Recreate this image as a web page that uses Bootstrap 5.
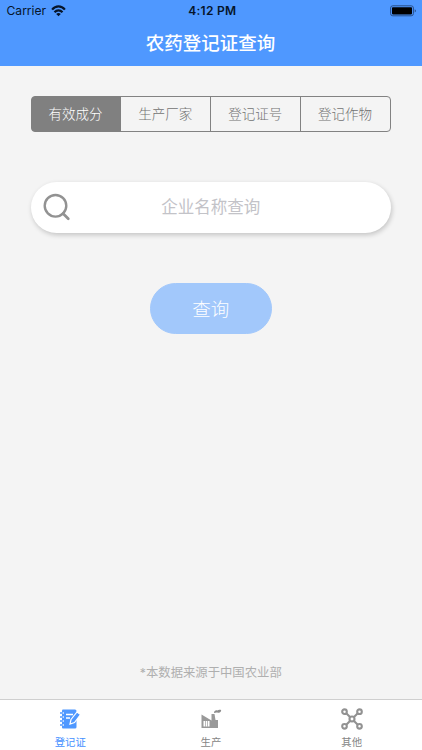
<!DOCTYPE html>
<html lang="zh-CN">
<head>
<meta charset="utf-8">
<meta name="viewport" content="width=device-width, initial-scale=1">
<title>农药登记证查询</title>
<link href="https://cdn.jsdelivr.net/npm/bootstrap@5.3.0/dist/css/bootstrap.min.css" rel="stylesheet">
<style>
body{font-family:Inter,"Noto Sans CJK SC",sans-serif;background:#f4f4f4;height:100vh;overflow:hidden}
.app-head{background:#4f98ff;height:66px}
.status{height:22px;font-size:12.1px;color:#06152b;line-height:22px;padding-left:6.5px;padding-right:5px}
.status svg{display:block}
.wifi{margin-left:5px}
.clock{font-weight:600;font-size:12px;letter-spacing:.25px;padding-left:1px}
.app-title{font-size:18.5px;font-weight:500;line-height:42px;color:#fff;padding-right:1px}
.main-area{padding:30px 31px 0 30.5px}
.segments{height:36px}
.segments .btn{--bs-btn-color:#727272;--bs-btn-border-color:#828282;--bs-btn-active-bg:#808080;--bs-btn-active-border-color:#808080;--bs-btn-active-color:#fff;--bs-btn-border-radius:4px;font-size:13.5px;font-weight:300;line-height:33px;padding:0 1px 0 0;flex:1 1 0}
.search-box{height:51px;margin-top:50px;background:#fff;box-shadow:1px 2px 5px rgba(0,0,0,.2)}
.search-box svg{margin:0 0 2px 12px;flex:none}
.search-box input{font-size:16.5px;padding:0;color:#777;margin-right:40px}
.search-box input::placeholder{color:#c3c3c8;opacity:1}
.query-btn{width:122px;height:51px;margin-top:50px;--bs-btn-bg:#a2c8fb;--bs-btn-color:#fff;--bs-btn-border-color:#a2c8fb;font-size:18.5px;font-weight:300;padding:2px 0 0}
.source-note{font-size:12.35px;color:#afafaf;line-height:20px;margin-bottom:16px}
.tabs-bottom{height:51px;background:#fff;border-top:1px solid #cfcfcf}
.tabs-bottom a{color:#858585;font-size:10.4px;line-height:12px;padding-top:8px}
.tabs-bottom a.active{color:#4490ff}
.tabs-bottom svg{display:block;margin-bottom:7px;flex:none}
</style>
</head>
<body class="d-flex flex-column">
<header class="app-head flex-shrink-0">
  <div class="status row g-0 align-items-center">
    <div class="col d-flex align-items-center">Carrier
      <svg class="wifi" width="15" height="12" viewBox="0 0 15 12" fill="none" stroke="#06152b" stroke-width="2.200"><path d="M1.100 4.600C4.600.400 10.400.400 13.900 4.600M3.500 7.300c2.300-2.500 5.700-2.500 8 0"/><path d="M7.500 11.200 5.200 8.900c1.400-1.200 3.200-1.200 4.600 0z" fill="#06152b" stroke="none"/></svg>
    </div>
    <div class="col-auto clock">4:12 PM</div>
    <div class="col d-flex justify-content-end">
      <svg width="27" height="12" viewBox="0 0 27 12"><rect x=".6" y=".8" width="22.800" height="10" rx="2.200" fill="none" stroke="#29508a"/><rect x="2" y="2.200" width="20" height="7.200" rx=".8" fill="#000"/><path d="M24.700 4.200c1.700.5 1.700 2.700 0 3.200z" fill="#29508a"/></svg>
    </div>
  </div>
  <h1 class="app-title text-center m-0">农药登记证查询</h1>
</header>
<main class="main-area d-flex flex-column flex-grow-1">
  <div class="btn-group segments w-100" role="group">
    <button class="btn active" type="button">有效成分</button>
    <button class="btn" type="button">生产厂家</button>
    <button class="btn" type="button">登记证号</button>
    <button class="btn" type="button">登记作物</button>
  </div>
  <div class="search-box rounded-pill d-flex align-items-center">
    <svg width="28" height="28" viewBox="0 0 28 28" fill="none" stroke="#929292" stroke-width="2.400"><circle cx="12.500" cy="12.800" r="10.800"/><path d="m20 20.500 5.300 5.300" stroke-width="2.700" stroke-linecap="round"/></svg>
    <input class="form-control border-0 shadow-none bg-transparent text-center" type="text" placeholder="企业名称查询" aria-label="企业名称查询">
  </div>
  <button class="btn query-btn rounded-pill align-self-center" type="button">查询</button>
  <p class="source-note text-center mt-auto">*本数据来源于中国农业部</p>
</main>
<nav class="tabs-bottom d-flex flex-shrink-0">
  <a class="active col-4 d-flex flex-column align-items-center text-decoration-none" href="#">
    <svg width="22" height="22" viewBox="0 0 22 22"><path d="M4 1.500h12q1.500 0 1.500 1.500V19q0 1.500-1.500 1.500H4q-1 0-1-1V2.500q0-1 1-1z" fill="#4f98ff"/><path d="M7 6.500h7M7 10h4" stroke="#fff" stroke-width="1.300"/><path d="M1 5h4M1 9h4M1 13h4M1 17h4" stroke="#fff" stroke-width="2.200"/><path d="M1 5h3.500M1 9h3.500M1 13h3.500M1 17h3.500" stroke="#4f98ff" stroke-width="1.500"/><path d="m11 16 1-4.500L18 4l3.500 2.500-6 8z" fill="#4f98ff" stroke="#fff" stroke-width="1.200"/></svg>
    登记证
  </a>
  <a class="col-4 d-flex flex-column align-items-center text-decoration-none" href="#">
    <svg width="22" height="22" viewBox="0 0 22 22"><path d="M1.500 20V6.500l10 6V6h3l1 6H18v8z" fill="#999"/><path d="M3.500 13h6v5.500h-6z" fill="#fff"/><path d="M5.500 13v6M7.500 13v6" stroke="#aaa" stroke-width=".8"/><path d="M14 5c0-2.500 2-3.200 3.500-2.500 1-1 2.500-.8 3.700-.4-.2 2.200-1.500 3.100-3.200 2.600-1.200-.4-2.500-.2-4 .3z" fill="#8d8d8d"/></svg>
    生产
  </a>
  <a class="col-4 d-flex flex-column align-items-center text-decoration-none" href="#">
    <svg width="22" height="22" viewBox="0 0 22 22" fill="none" stroke="#929292" stroke-width="2.100"><path d="m5.500 5.500 11 11m0-11-11 11"/><g fill="#fff"><circle cx="3.500" cy="3.700" r="2.300"/><circle cx="18.500" cy="3.700" r="2.300"/><circle cx="3.500" cy="18.300" r="2.300"/><circle cx="18.500" cy="18.300" r="2.300"/><circle cx="11" cy="11" r="2.500"/></g></svg>
    其他
  </a>
</nav>
<script src="https://cdn.jsdelivr.net/npm/bootstrap@5.3.0/dist/js/bootstrap.bundle.min.js"></script>
</body>
</html>
